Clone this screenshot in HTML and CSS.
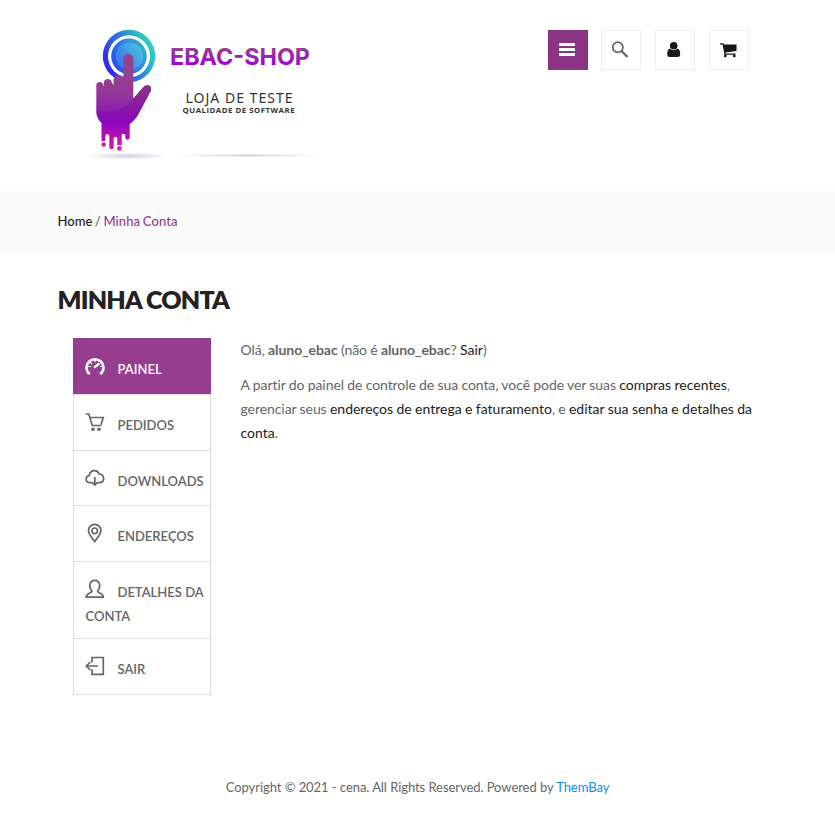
FILE: index.html
```html
<!DOCTYPE html>
<html lang="pt-BR">
<head>
<meta charset="utf-8">
<title>Minha Conta</title>
<link rel="stylesheet" href="styles.css">
</head>
<body>
<header class="header">
  <a class="logo" aria-label="EBAC-SHOP">
    <svg width="250" height="150" viewBox="75 15 250 150">
      <defs>
        <linearGradient id="ring" x1="0" y1=".75" x2="1" y2=".25"><stop offset="0" stop-color="#3018ff"/><stop offset=".5" stop-color="#2f7ddb"/><stop offset="1" stop-color="#2de0b8"/></linearGradient>
        <linearGradient id="disc" x1="0" y1=".8" x2="1" y2=".2"><stop offset="0" stop-color="#2b45f4"/><stop offset="1" stop-color="#34b4d0"/></linearGradient>
        <linearGradient id="core" x1="0" y1=".8" x2="1" y2=".2"><stop offset="0" stop-color="#3a70ee"/><stop offset="1" stop-color="#48c4dc"/></linearGradient>
        <linearGradient id="hand" gradientUnits="userSpaceOnUse" x1="0" y1="75" x2="0" y2="150"><stop offset="0" stop-color="#964090"/><stop offset=".25" stop-color="#933a98"/><stop offset=".63" stop-color="#8c08be"/><stop offset="1" stop-color="#e414ac"/></linearGradient>
        <linearGradient id="palm" gradientUnits="userSpaceOnUse" x1="0" y1="85" x2="0" y2="124"><stop offset="0" stop-color="#822a7c"/><stop offset="1" stop-color="#8a04c0"/></linearGradient>
        <linearGradient id="word" gradientUnits="userSpaceOnUse" x1="0" y1="48" x2="0" y2="65"><stop offset="0" stop-color="#954090"/><stop offset="1" stop-color="#a000dc"/></linearGradient>
        <radialGradient id="shade"><stop offset="0" stop-color="#d0cde2"/><stop offset="1" stop-color="#d0cde2" stop-opacity="0"/></radialGradient>
      </defs>
      <ellipse cx="127" cy="156" rx="41" ry="3.5" fill="url(#shade)"/>
      <ellipse cx="248" cy="155.5" rx="75" ry="1.8" fill="url(#shade)"/>
      <circle cx="129" cy="56" r="26.2" fill="url(#ring)"/>
      <circle cx="129" cy="56.3" r="21" fill="#fff"/>
      <circle cx="129" cy="56.3" r="17.8" fill="url(#disc)"/>
      <circle cx="129.5" cy="56.3" r="13.8" fill="url(#core)"/>
      <path fill="url(#hand)" d="M96.3 85C96.3 81 103 81 103.3 85L103.8 87V83C103.8 77.500 111.500 77.500 112 83L113.500 85V80C114 74.500 122.500 74.500 123.300 78V59C123.300 52.300 133.300 52.300 133.300 59V98.500L143 87.500C146 83.500 153.500 85 150.500 91.500L139 113C136.500 118 134 120.500 129.700 124V137.500C129.700 140.500 125.300 140.500 125.300 137.500V135C125.300 133.500 121.700 133.500 121.700 135V145H117.300V138C117.300 136.500 113.700 136.500 113.700 138V147C113.700 150 109.300 150 109.300 147V136C109.300 133.500 105.300 133.500 105.300 136V141H101.500V123C98.500 120 96.300 116 96.300 110Z"/>
      <path fill="url(#palm)" opacity=".65" d="M133.300 98.500L143 87.500C146 83.500 153.500 85 150.500 91.500L139 113C136.500 118 134 120.500 129.700 124Q115 121 101.700 123C98.500 120 96.500 116 96.300 111C112 114 130 107 133.300 98.500Z"/>
      <circle cx="103.700" cy="144.500" r="2.200" fill="#d018b4"/>
      <circle cx="119.400" cy="148.400" r="2.400" fill="#e81cae"/>
      <text class="logo-name" x="170" y="65" textLength="140" lengthAdjust="spacingAndGlyphs" fill="url(#word)">EBAC-SHOP</text>
      <text class="logo-line" x="185.500" y="103" textLength="107">LOJA DE TESTE</text>
      <text class="logo-sub" x="182.500" y="112.700" textLength="112">QUALIDADE DE SOFTWARE</text>
    </svg>
  </a>
  <nav class="actions">
    <a class="action action-menu"><svg width="40" height="40"><path d="M11 13h16v3H11zM11 18h16v3H11zM11 23h16v3H11z" fill="#fff"/></svg></a>
    <a class="action"><svg width="38" height="38" fill="none" stroke="#666"><circle cx="15.800" cy="16.300" r="5.100" stroke-width="1.700"/><path d="M19.500 20l6 6" stroke-width="2.300"/></svg></a>
    <a class="action"><svg width="38" height="38" fill="#15191c"><circle cx="17.700" cy="14.700" r="3.800"/><path d="M13.800 17.500q3.900 3.400 7.800 0 2.600 1.300 2.600 5.300 0 3.200-2.600 3.200h-7.800q-2.600 0-2.600-3.200 0-4 2.600-5.300z"/></svg></a>
    <a class="action"><svg width="38" height="38" fill="#15191c"><path d="M10 12.300h3.500l.5 1.300h12.500v6.500L15.500 21.600v1h10v1.200H14.200V22L12.500 13.600H10z"/><circle cx="15.300" cy="24.900" r="1.400"/><circle cx="24.300" cy="24.900" r="1.400"/></svg></a>
  </nav>
</header>
<div class="breadcrumb"><a>Home</a> / <span class="current">Minha Conta</span></div>
<main class="main">
  <h1 class="title">MINHA CONTA</h1>
  <div class="account">
    <ul class="menu">
      <li class="item active"><svg class="icon" viewBox="0 0 20 20"><path d="M5.200 17.200H3.500A8.500 8.500 0 1 1 16.500 17.200H14.800" stroke-width="2.600"/><path d="M3 10.500h3M4.800 6l2 2M10 3.500v2.800M17 10.500h-2" stroke-width="1.200"/><path d="M9 11.500L14.500 7.500" stroke-width="2.400"/></svg>PAINEL</li>
      <li class="item"><svg class="icon" viewBox="0 0 20 20"><path d="M.5 2h3.300l3.400 11.500h9.300M5 5.500h13.300l-2.300 7"/><circle class="dot" cx="8" cy="17.200" r="1.800"/><circle class="dot" cx="14" cy="17.200" r="1.800"/></svg>PEDIDOS</li>
      <li class="item"><svg class="icon" viewBox="0 0 20 20"><path d="M7.300 14.700H5C.2 14.700-.3 8.500 4.300 7.500 5 1.500 12.500 1.200 14 6c5.800 0 6.300 8.700.5 8.700h-2M9.800 9v8M7.200 14.300L9.800 17l2.600-2.700"/></svg>DOWNLOADS</li>
      <li class="item"><svg class="icon" viewBox="0 0 20 20"><path d="M9.700 18.500C7 14.500 3.500 11.500 3.500 7.500a6.200 6.200 0 0 1 12.400 0c0 4-3.500 7-6.200 11z"/><circle cx="9.700" cy="7.800" r="2.800"/></svg>ENDEREÇOS</li>
      <li class="item wrapped"><svg class="icon" viewBox="0 0 20 20"><path d="M7 12C3.500 8.500 4 1.300 9.700 1.300S16 8.500 12.500 12c0 2.300 5.800 1.600 5.800 6.200H1.200C1.200 13.600 7 14.300 7 12z"/></svg>DETALHES DA CONTA</li>
      <li class="item"><svg class="icon" viewBox="0 0 20 20"><path d="M7 6.500V1.500h11.300v16.800H7v-5M13 10H1.500M5.300 6L1.300 10l4 4"/></svg>SAIR</li>
    </ul>
    <section class="content">
      <p>Olá, <strong>aluno_ebac</strong> (não é <strong>aluno_ebac</strong>? <a>Sair</a>)</p>
      <p>A partir do painel de controle de sua conta, você pode ver suas <a>compras recentes</a>, gerenciar seus <a>endereços de entrega e faturamento</a>, e <a>editar sua senha e detalhes da conta</a>.</p>
    </section>
  </div>
</main>
<footer class="footer">Copyright © 2021 - cena. All Rights Reserved. Powered by <a>ThemBay</a></footer>
</body>
</html>
```
FILE: styles.css
```css
* { box-sizing: border-box; }
body {
  margin: 0;
  background: #fff;
  color: #666;
  font: 400 14px/24px Lato, sans-serif;
}
svg { display: block; }
header, p, h1, ul { margin: 0; padding: 0; }
.header {
  height: 190px;
  padding: 15px 86px 0 75px;
  display: flex;
  justify-content: space-between;
}
.logo-name { font: 700 23.5px Inter, sans-serif; }
.logo-line { font: 400 14px "Noto Sans", sans-serif; fill: #333; }
.logo-sub { font: 700 7.8px "Open Sans", sans-serif; fill: #333; }
.actions { display: flex; gap: 14px; padding-top: 15px; }
.action { width: 40px; height: 40px; border: 1px solid #eee; }
.action-menu { background: #8c3484; border: 0; margin-right: -1px; }
.breadcrumb {
  height: 62px;
  padding: 19px 57.5px;
  background: #fafafa;
  font-size: 13px;
  font-weight: 500;
  word-spacing: -.7px;
}
.breadcrumb a { color: #222; }
.current { color: #963d90; letter-spacing: .1px; }
.main { padding: 32px 58px 0 57.5px; height: 523px; }
.title { font-size: 25px; line-height: 30px; font-weight: 800; letter-spacing: -.8px; color: #222; }
.account { display: flex; gap: 29.5px; padding: 24px 0 0 15.5px; }
.menu { width: 138px; flex: none; list-style: none; border-bottom: 1px solid #dedede; }
.item {
  padding: 18px 0 12.500px 11.500px;
  border: 1px solid #dedede;
  border-bottom: 0;
  font-size: 13px;
  font-weight: 600;
}
.item.wrapped { padding-bottom: 10.700px; }
.item.active { background: #963d8f; border-color: #963d8f; color: #fff; padding-bottom: 13px; }
.item:last-child { padding-bottom: 13.200px; }
.icon {
  display: inline-block;
  width: 20px;
  height: 20px;
  margin: -5px 13px -1px -1px;
  vertical-align: -1px;
  fill: none;
  stroke: currentColor;
  stroke-width: 1.700;
}
.dot { fill: currentColor; stroke: none; }
.content { flex: 1; letter-spacing: -.07px; word-spacing: -.2px; }
.content p { margin-bottom: 11px; }
.content a { color: #222; letter-spacing: 0; }
.footer { text-align: center; font-size: 13px; letter-spacing: -.06px; }
.footer a { color: #0d91f5; }
```
